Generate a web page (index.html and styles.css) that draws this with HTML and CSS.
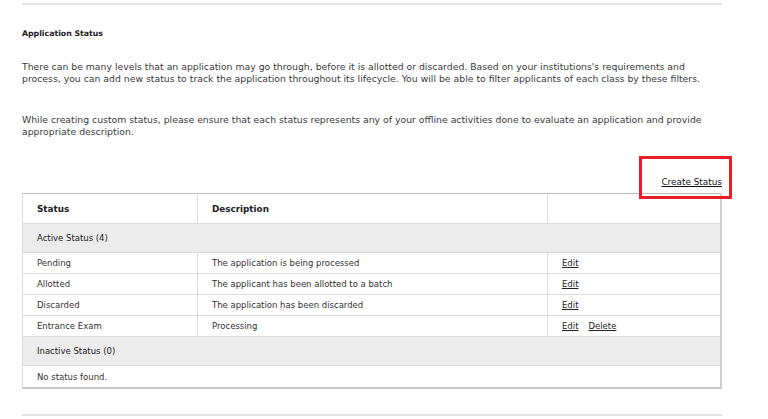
FILE: index.html
```html
<!DOCTYPE html>
<html>
<head>
<meta charset="utf-8">
<link rel="stylesheet" href="styles.css">
</head>
<body>
<div class="page">
  <div class="rule"></div>
  <h2 class="title">Application Status</h2>
  <p class="intro">There can be many levels that an application may go through, before it is allotted or discarded. Based on your institutions's requirements and<br>process, you can add new status to track the application throughout its lifecycle. You will be able to filter applicants of each class by these filters.</p>
  <p class="intro second">While creating custom status, please ensure that each status represents any of your offline activities done to evaluate an application and provide<br>appropriate description.</p>
  <div class="actions">
    <a class="create" href="#">Create Status</a>
  </div>
  <table class="status-table">
    <thead>
      <tr><th class="c1">Status</th><th class="c2">Description</th><th class="c3"></th></tr>
    </thead>
    <tbody>
      <tr class="group"><td colspan="3">Active Status (4)</td></tr>
      <tr><td>Pending</td><td>The application is being processed</td><td><a href="#">Edit</a></td></tr>
      <tr><td>Allotted</td><td>The applicant has been allotted to a batch</td><td><a href="#">Edit</a></td></tr>
      <tr><td>Discarded</td><td>The application has been discarded</td><td><a href="#">Edit</a></td></tr>
      <tr><td>Entrance Exam</td><td>Processing</td><td><a href="#">Edit</a><a class="del" href="#">Delete</a></td></tr>
      <tr class="group"><td colspan="3">Inactive Status (0)</td></tr>
      <tr class="empty"><td colspan="3">No status found.</td></tr>
    </tbody>
  </table>
  <div class="rule bottom"></div>
</div>
</body>
</html>
```

FILE: styles.css
```css
html, body {
  margin: 0;
  padding: 0;
  background: #fff;
}
body {
  font-family: "DejaVu Sans", "Liberation Sans", sans-serif;
  color: #3a3a3a;
}
.page {
  width: 700px;
  margin-left: 22px;
  padding-top: 3px;
}
.rule {
  height: 2px;
  background: #e4e4e4;
}
.title {
  font-size: 7.8px;
  font-weight: bold;
  margin: 23px 0 0;
  line-height: 12px;
  color: #222;
}
.intro {
  font-size: 9.3px;
  line-height: 12px;
  margin: 21px 0 0;
  white-space: nowrap;
}
.intro.second {
  margin-top: 29px;
}
.actions {
  margin-top: 38px;
  height: 17px;
  display: flex;
  justify-content: flex-end;
  align-items: flex-start;
}
.create {
  position: relative;
  font-size: 8.9px;
  line-height: 12px;
  color: #111;
  text-decoration: underline;
}
.create::after {
  content: "";
  position: absolute;
  left: -22px;
  top: -20px;
  right: -10px;
  bottom: -11px;
  border: 3px solid #e61e28;
}
.status-table {
  width: 700px;
  border-collapse: collapse;
  font-size: 8.5px;
  color: #333;
  border-right: 2px solid #cfcfcf;
  border-bottom: 2px solid #c8c8c8;
}
.status-table th,
.status-table td {
  text-align: left;
  border: 1px solid #dcdcdc;
  padding: 0 14px;
}
.status-table th {
  height: 29px;
  font-size: 8.8px;
  font-weight: bold;
  color: #222;
  border-top-color: #bdbdbd;
}
.status-table th.c1 { width: 146px; }
.status-table th.c2 { width: 321px; }
.status-table td {
  height: 20px;
}
.status-table tr.group td {
  height: 28px;
  background: #ececec;
  color: #222;
}
.status-table tr.empty td {
  height: 21px;
}
.status-table a {
  color: #222;
  text-decoration: underline;
}
.status-table a.del {
  margin-left: 10px;
}
.rule.bottom {
  margin-top: 25px;
}
```
